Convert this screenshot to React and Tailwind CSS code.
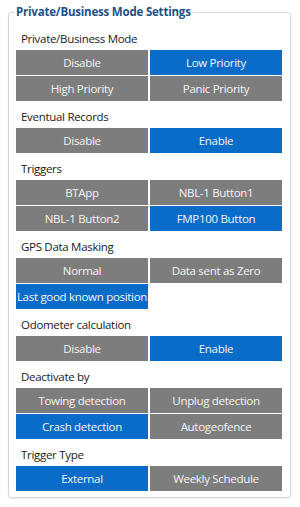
const sections = [
  {
    label: 'Private/Business Mode',
    options: [
      { text: 'Disable' },
      { text: 'Low Priority', on: true },
      { text: 'High Priority' },
      { text: 'Panic Priority' },
    ],
  },
  {
    label: 'Eventual Records',
    options: [{ text: 'Disable' }, { text: 'Enable', on: true }],
  },
  {
    label: 'Triggers',
    options: [
      { text: 'BTApp' },
      { text: 'NBL-1 Button1' },
      { text: 'NBL-1 Button2' },
      { text: 'FMP100 Button', on: true },
    ],
  },
  {
    label: 'GPS Data Masking',
    options: [
      { text: 'Normal' },
      { text: 'Data sent as Zero' },
      { text: 'Last good known position', on: true },
    ],
  },
  {
    label: 'Odometer calculation',
    options: [{ text: 'Disable' }, { text: 'Enable', on: true }],
  },
  {
    label: 'Deactivate by',
    options: [
      { text: 'Towing detection' },
      { text: 'Unplug detection' },
      { text: 'Crash detection', on: true },
      { text: 'Autogeofence' },
    ],
  },
  {
    label: 'Trigger Type',
    options: [{ text: 'External', on: true }, { text: 'Weekly Schedule' }],
  },
]

function Option({ text, on }) {
  return (
    <div
      className={
        'h-[25px] flex items-center justify-center whitespace-nowrap text-[11.5px] tracking-[-0.3px] text-[#f4f4f4] ' +
        (on ? 'bg-[#0a6cc9]' : 'bg-[#7d7d7d]')
      }
    >
      {text}
    </div>
  )
}

export default function App() {
  return (
    <div
      className="w-[300px] h-[507px] bg-white pt-[4px] pl-[8px]"
      style={{ fontFamily: '"Open Sans", "Noto Sans", sans-serif' }}
    >
      <fieldset className="w-[283px] border border-[#d3d9df] rounded-[3px] pl-[7px] pr-[8px] pb-[6px] shadow-[0_1px_2px_rgba(0,0,0,0.08)]">
        <legend className="-ml-[2px] px-[2px] text-[11.5px] leading-[16px] tracking-[-0.2px] font-bold text-[#1d5189]">
          Private/Business Mode Settings
        </legend>
        {sections.map((s, i) => (
          <div key={s.label}>
            <div
              className={
                'pl-[5px] pb-[2px] text-[11.5px] tracking-[-0.3px] leading-[19px] text-[#1a1a1a] ' +
                (i === 0 ? 'pt-[9px]' : 'pt-[6px]')
              }
            >
              {s.label}
            </div>
            <div className="grid grid-cols-2 gap-x-[2px] gap-y-[1px]">
              {s.options.map((o) => (
                <Option key={o.text} {...o} />
              ))}
            </div>
          </div>
        ))}
      </fieldset>
    </div>
  )
}
